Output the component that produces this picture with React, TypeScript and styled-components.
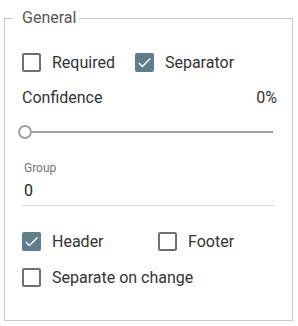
import React from "react";
import styled, { createGlobalStyle } from "styled-components";

const Global = createGlobalStyle`
  html, body { margin: 0; padding: 0; background: #fff; }
  body { font-family: Roboto, "Noto Sans", sans-serif; color: #333; }
`;

const Page = styled.div`
  width: 298px;
  height: 326px;
  box-sizing: border-box;
  padding: 10px 5px 5px 4px;
`;

const Fieldset = styled.fieldset`
  margin: 0;
  box-sizing: border-box;
  width: 289px;
  height: 311px;
  border: 1px solid #c8c8c8;
  border-radius: 0;
  padding: 14px 19px 0 17px;
  display: flex;
  flex-direction: column;
`;

const Legend = styled.legend`
  margin-left: -9px;
  padding: 0 3px 0 9px;
  font-size: 16px;
  line-height: 16px;
  color: #555;
`;

const Row = styled.div<{ $gap?: number; $mt?: number }>`
  display: flex;
  align-items: center;
  gap: ${(p) => p.$gap ?? 20}px;
  margin-top: ${(p) => p.$mt ?? 0}px;
`;

const GridRow = styled.div<{ $mt?: number }>`
  display: grid;
  grid-template-columns: 136px 1fr;
  align-items: center;
  margin-top: ${(p) => p.$mt ?? 0}px;
`;

const CheckLabel = styled.label`
  display: flex;
  align-items: center;
  gap: 11px;
  font-size: 16px;
  height: 20px;
  cursor: pointer;
`;

const Box = styled.span<{ $checked?: boolean }>`
  box-sizing: border-box;
  width: 19px;
  height: 19px;
  border-radius: 2px;
  border: ${(p) => (p.$checked ? "none" : "2px solid #707070")};
  background: ${(p) => (p.$checked ? "#5f7d8c" : "#fff")};
  display: flex;
  align-items: center;
  justify-content: center;
  flex-shrink: 0;
`;

const Check = ({ checked, label }: { checked?: boolean; label: string }) => (
  <CheckLabel>
    <Box $checked={checked}>
      {checked && (
        <svg width="17" height="17" viewBox="0 0 24 24">
          <path d="M9 16.17L4.83 12l-1.42 1.41L9 19 21 7l-1.41-1.41z" fill="#fff" />
        </svg>
      )}
    </Box>
    {label}
  </CheckLabel>
);

const SpaceRow = styled.div`
  display: flex;
  justify-content: space-between;
  align-items: center;
  font-size: 16px;
  margin-top: 16px;
  margin-right: -4px;
`;

const Slider = styled.div`
  height: 16px;
  margin-top: 17px;
  margin-left: -4px;
  display: flex;
  align-items: center;
`;

const Track = styled.div`
  flex: 1;
  height: 2px;
  background: #9e9e9e;
`;

const Thumb = styled.div`
  box-sizing: border-box;
  width: 14px;
  height: 14px;
  border-radius: 50%;
  border: 2px solid #9e9e9e;
  background: #fff;
  flex-shrink: 0;
`;

const Field = styled.div`
  margin-top: 21px;
  margin-right: -2px;
  padding-left: 2px;
  border-bottom: 1px solid #dcdcdc;
  padding-bottom: 5px;
`;

const FieldLabel = styled.div`
  font-size: 12px;
  line-height: 14px;
  color: #757575;
`;

const FieldValue = styled.div`
  font-size: 16px;
  line-height: 18px;
  margin-top: 7px;
  color: #222;
`;

export default function App() {
  return (
    <>
      <Global />
      <Page>
        <Fieldset>
          <Legend>General</Legend>
          <Row $gap={20} $mt={12}>
            <Check label="Required" />
            <Check checked label="Separator" />
          </Row>
          <SpaceRow>
            <span>Confidence</span>
            <span>0%</span>
          </SpaceRow>
          <Slider>
            <Thumb />
            <Track />
          </Slider>
          <Field>
            <FieldLabel>Group</FieldLabel>
            <FieldValue>0</FieldValue>
          </Field>
          <GridRow $mt={25}>
            <Check checked label="Header" />
            <Check label="Footer" />
          </GridRow>
          <Row $mt={16}>
            <Check label="Separate on change" />
          </Row>
        </Fieldset>
      </Page>
    </>
  );
}
